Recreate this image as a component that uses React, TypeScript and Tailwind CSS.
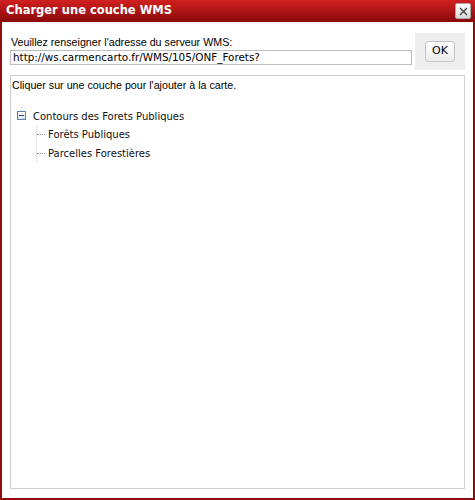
import React from "react";

const tahoma = { fontFamily: '"Liberation Sans", Arial, sans-serif' };
const verdana = { fontFamily: '"DejaVu Sans", Verdana, sans-serif' };

const TreeChild = ({label}: {label: string}) => (
    <div className="flex items-center h-[19px]">
        <div className="w-[31px] h-full relative">
            <div className="absolute left-[19px] top-0 bottom-0 border-l border-dotted border-gray-300" />
            <div className="absolute left-[20px] top-[9px] w-[8px] border-t border-dotted border-gray-400" />
        </div>
        <span className="text-[10px] text-[#111]" style={verdana}>{label}</span>
    </div>
);

const App = () => {
    return (
        <div className="w-[475px] h-[500px] flex flex-col bg-white border-l-2 border-r-2 border-b-2 border-[#8e0c0c]" style={tahoma}>
            {/* title bar */}
            <div className="h-[22px] flex items-center justify-between bg-gradient-to-b from-[#d22020] to-[#8a0909] -mx-[2px] pl-[6px] pr-[4px]">
                <span className="text-white font-bold text-[11.5px] leading-none" style={verdana}>Charger une couche WMS</span>
                <button className="w-[16px] h-[16px] rounded-[2px] bg-gradient-to-b from-white to-[#d8d8d8] border border-[#aaa] flex items-center justify-center">
                    <svg width="9" height="9" viewBox="0 0 9 9">
                        <path d="M1 1L8 8M8 1L1 8" stroke="#444" strokeWidth="1.3" />
                    </svg>
                </button>
            </div>

            {/* body */}
            <div className="flex-1 flex flex-col px-[8px] pt-[12px] pb-[9px]">
                <div className="flex gap-[3px]">
                    <div className="flex-1 flex flex-col">
                        <label className="text-[10.7px] text-black leading-[14px] mt-[1px] ml-[1px]">Veuillez renseigner l'adresse du serveur WMS:</label>
                        <div className="mt-[1px] h-[15px] border border-[#bdbdbd] flex items-center px-[2px]">
                            <span className="text-[10.4px] text-black" style={verdana}>http://ws.carmencarto.fr/WMS/105/ONF_Forets?</span>
                        </div>
                    </div>
                    <div className="w-[50px] h-[37px] bg-[#eeeeee] flex items-center justify-center -mt-[1px]">
                        <button className="w-[30px] h-[21px] border border-[#c5c5c5] rounded-[3px] bg-gradient-to-b from-white to-[#ececec] text-[11px] text-black" style={verdana}>OK</button>
                    </div>
                </div>

                <div className="flex-1 mt-[5px] border border-[#cfcfcf] pt-[2px] pl-[1px]">
                    <p className="text-[10.7px] text-black leading-[14px]">Cliquer sur une couche pour l'ajouter à la carte.</p>
                    <div className="mt-[15px] pl-[5px]">
                        <div className="flex items-center h-[18px]">
                            <div className="w-[16px] h-full relative">
                                <div className="absolute left-[4px] top-0 h-[4px] border-l border-dotted border-gray-300" />
                                <div className="absolute left-0 top-[4px] w-[9px] h-[9px] border border-[#5a7fa8] bg-gradient-to-b from-white to-[#dde6ef] flex items-center justify-center">
                                    <div className="w-[5px] h-px bg-[#2b4a6e]" />
                                </div>
                            </div>
                            <span className="text-[10px] text-[#111]" style={verdana}>Contours des Forets Publiques</span>
                        </div>
                        <TreeChild label="Forêts Publiques" />
                        <TreeChild label="Parcelles Forestières" />
                    </div>
                </div>
            </div>
        </div>
    );
};

export default App;
